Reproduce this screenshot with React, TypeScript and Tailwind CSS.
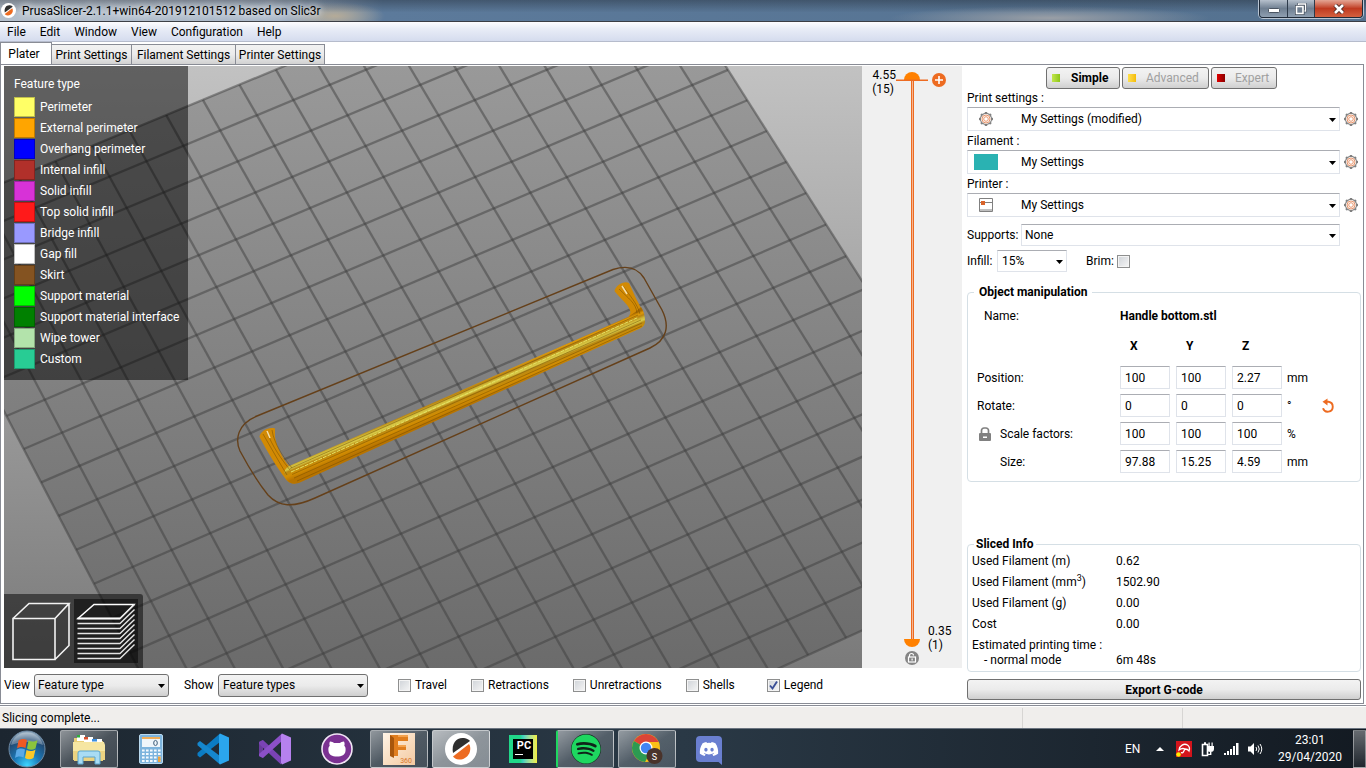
import React from "react";
import { FaDiscord, FaSpotify } from "react-icons/fa";

type Pt = [number, number];

/* ---------- print bed projection ---------- */
const TL: Pt = [-94, 223.3];
const TR: Pt = [633.5, -79];
const BR: Pt = [1034.3, 552.4];
const BL: Pt = [260.7, 903.5];

function makeProjector(p0: Pt, p1: Pt, p2: Pt, p3: Pt) {
  const sx = p0[0] - p1[0] + p2[0] - p3[0];
  const sy = p0[1] - p1[1] + p2[1] - p3[1];
  const dx1 = p1[0] - p2[0];
  const dx2 = p3[0] - p2[0];
  const dy1 = p1[1] - p2[1];
  const dy2 = p3[1] - p2[1];
  const det = dx1 * dy2 - dx2 * dy1;
  const g = (sx * dy2 - dx2 * sy) / det;
  const h = (dx1 * sy - sx * dy1) / det;
  return (u: number, v: number): Pt => {
    const w = 1 + g * u + h * v;
    return [
      ((p1[0] - p0[0] + g * p1[0]) * u + (p3[0] - p0[0] + h * p3[0]) * v + p0[0]) / w,
      ((p1[1] - p0[1] + g * p1[1]) * u + (p3[1] - p0[1] + h * p3[1]) * v + p0[1]) / w,
    ];
  };
}

const project = makeProjector(TL, TR, BR, BL);
const steps = Array.from({ length: 21 }, (_, i) => i / 20);

function Scene() {
  return (
    <svg className="block h-full w-full" viewBox="4 66 858 602" preserveAspectRatio="xMidYMid slice" aria-hidden="true">
      <defs>
        <linearGradient id="sky" gradientUnits="userSpaceOnUse" x1="0" y1="66" x2="0" y2="668">
          <stop offset="0" stopColor="#c2c2c2" />
          <stop offset="1" stopColor="#7a7a7a" />
        </linearGradient>
        <linearGradient id="bed" gradientUnits="userSpaceOnUse" x1="0" y1="66" x2="0" y2="668">
          <stop offset="0" stopColor="#999999" />
          <stop offset="1" stopColor="#6b6b6b" />
        </linearGradient>
        <linearGradient id="bar" gradientUnits="userSpaceOnUse" x1="457" y1="388" x2="465" y2="407">
          <stop offset="0" stopColor="#a86a00" />
          <stop offset="0.12" stopColor="#e09a08" />
          <stop offset="0.24" stopColor="#b98412" />
          <stop offset="0.36" stopColor="#cfb838" />
          <stop offset="0.46" stopColor="#d8ca48" />
          <stop offset="0.56" stopColor="#b98a14" />
          <stop offset="0.76" stopColor="#d28d02" />
          <stop offset="1" stopColor="#b87400" />
        </linearGradient>
      </defs>
      <rect x="4" y="66" width="858" height="602" fill="url(#sky)" />
      <polygon points={[TL, TR, BR, BL].map((p) => p.join(",")).join(" ")} fill="url(#bed)" />
      <g stroke="#3c3c3c" strokeOpacity="0.48" strokeWidth="2.3">
        {steps.map((t) => {
          const a = project(t, 0);
          const b = project(t, 1);
          const c = project(0, t);
          const d = project(1, t);
          return (
            <React.Fragment key={t}>
              <line x1={a[0]} y1={a[1]} x2={b[0]} y2={b[1]} />
              <line x1={c[0]} y1={c[1]} x2={d[0]} y2={d[1]} />
            </React.Fragment>
          );
        })}
      </g>
      <path
        d="M257 416 L613 269.500 C627 265 637 267 644 278 L662 310 C670 326 667 340 650 348 L315 498 C293 508 279 507 268 495 C260 485 248 466 240 451 C235 440 237 424 257 416 Z"
        fill="none"
        stroke="#65401a"
        strokeWidth="1.400"
      />
      {/* feet */}
      <path d="M614.500 291 C616 285 624 280.500 629 283 L634 294 C637 302 642 307 644 316 L638 326 L629 316 C635 309 621 300 614.500 291 Z" fill="#d28a04" />
      <path d="M259.500 437 C260 431 269 426.500 275 428.500 L275 437 C277 448 283 459 289 466 L300 482 C293 485 288 483 285 478 C276 466 268 453 259.500 437 Z" fill="#d28a04" />
      {/* bar */}
      <path d="M288 466.500 L628 317 C634 313 638 310 641 307 C644 311 645 317 645 321 C645 325 643 327 640 328.500 L301 482 C295 485 289 484 286 479 C283 474 284 470 288 466.500 Z" fill="url(#bar)" />
      <g stroke="#6f4a00" strokeWidth="0.800" strokeOpacity="0.6" fill="none">
        <path d="M290 468.500 L638 315" />
        <path d="M292 474.500 L641 320" />
        <path d="M294 478 L642 323" />
        <path d="M297 481 L642 326" />
        <path d="M263 434 C270 446 279 462 287 475" />
        <path d="M267 432 C272 446 282 460 290 470" />
        <path d="M272 430 C274 444 284 458 292 468" />
        <path d="M619 289 C628 298 636 303 637 313" />
        <path d="M623 286 C630 296 637 303 640 314" />
      </g>
      <path d="M291 472 L638 317.500" stroke="#e6e464" strokeWidth="1" strokeDasharray="4 1" fill="none" />
      <path d="M267 431 L270 438 M622 286 L627 294" stroke="#f6dfa8" strokeWidth="1.500" fill="none" />
    </svg>
  );
}

/* ---------- small drawings ---------- */
function Caret({ className = "" }: { className?: string }) {
  return (
    <svg className={`pointer-events-none absolute ${className}`} width="7" height="4" viewBox="0 0 7 4" aria-hidden="true">
      <path d="M0 0h7L3.500 4z" fill="#000" />
    </svg>
  );
}

function Gear() {
  const teeth = Array.from({ length: 8 }, (_, i) => i * 45);
  return (
    <svg width="14" height="14" viewBox="0 0 14 14" aria-hidden="true">
      <circle cx="7" cy="7" r="5.600" fill="none" stroke="#808080" strokeWidth="1.100" />
      {teeth.map((a) => (
        <rect key={a} x="5.800" y="0" width="2.400" height="1.700" fill="#808080" transform={`rotate(${a} 7 7)`} />
      ))}
      <circle cx="7" cy="7" r="4" fill="none" stroke="#e58a5c" strokeWidth="0.900" />
      <circle cx="7" cy="7" r="2.300" fill="none" stroke="#e58a5c" strokeWidth="0.900" />
    </svg>
  );
}

function PrusaLogo({ size }: { size: number }) {
  return (
    <svg width={size} height={size} viewBox="0 0 32 32" aria-hidden="true">
      <circle cx="16" cy="16" r="16" fill="#fff" />
      <path d="M8 20 C6 10 12 4 19 5 C22 5.500 24 6.500 25 8 Z" fill="#2f2f2f" />
      <path d="M24 11 C28 18 22 27 14 26.500 C11 26.300 9 25 8 23.500 Z" fill="#ed6b21" />
    </svg>
  );
}

/* ---------- reusable controls ---------- */
const fieldBorder = "border border-[#dfe3ea] border-t-[#abadb3] bg-white";
const buttonFace = "rounded-[3px] border border-[#707070] bg-linear-to-b from-[#f3f3f3] from-0% via-[#ebebeb] via-50% to-[#cfcfcf]";

function Preset({ id, label, value, icon }: { id: string; label: string; value: string; icon: React.ReactNode }) {
  return (
    <div>
      <label htmlFor={id} className="block h-[19px] leading-[21px]">
        {label}
      </label>
      <div className="flex items-center gap-1">
        <div className="relative flex-1">
          <select id={id} className={`block h-6 w-full appearance-none pl-[53px] outline-none ${fieldBorder}`}>
            <option>{value}</option>
          </select>
          <span className="pointer-events-none absolute top-0 left-[7px] flex h-6 w-6 items-center justify-center">{icon}</span>
          <Caret className="top-[11px] right-1" />
        </div>
        <button type="button" aria-label={`Edit ${label}`} className="w-[17px]">
          <Gear />
        </button>
      </div>
    </div>
  );
}

function Check({ label, checked = false }: { label: string; checked?: boolean }) {
  return (
    <label className="flex items-center gap-1">
      <span className="relative flex h-[13px] w-[13px]">
        <input
          type="checkbox"
          defaultChecked={checked}
          className="peer h-[13px] w-[13px] appearance-none border border-[#8e8f8f] bg-linear-to-br from-[#cfd3d8] to-[#f6f6f6] shadow-[inset_0_0_0_1px_#f4f4f4]"
        />
        <svg className="pointer-events-none absolute top-0 left-0 hidden peer-checked:block" width="13" height="13" viewBox="0 0 13 13" aria-hidden="true">
          <path d="M3 6.500L5.500 9.500L10 2.500" fill="none" stroke="#3a4f96" strokeWidth="1.900" />
        </svg>
      </span>
      {label}
    </label>
  );
}

/* ---------- data ---------- */
const legend: [string, string][] = [
  ["Perimeter", "bg-[#ffff66]"],
  ["External perimeter", "bg-[#ffa500]"],
  ["Overhang perimeter", "bg-[#0000ff]"],
  ["Internal infill", "bg-[#b1302a]"],
  ["Solid infill", "bg-[#d732d7]"],
  ["Top solid infill", "bg-[#ff1a1a]"],
  ["Bridge infill", "bg-[#9999ff]"],
  ["Gap fill", "bg-[#ffffff]"],
  ["Skirt", "bg-[#845321]"],
  ["Support material", "bg-[#00ff00]"],
  ["Support material interface", "bg-[#008000]"],
  ["Wipe tower", "bg-[#b3e3ab]"],
  ["Custom", "bg-[#28cc94]"],
];

const axes = ["X", "Y", "Z"];
const manipulation: { label: string; values: string[]; unit: string; lock?: boolean; indent?: boolean; reset?: boolean }[] = [
  { label: "Position:", values: ["100", "100", "2.27"], unit: "mm" },
  { label: "Rotate:", values: ["0", "0", "0"], unit: "°", reset: true },
  { label: "Scale factors:", values: ["100", "100", "100"], unit: "%", lock: true, indent: true },
  { label: "Size:", values: ["97.88", "15.25", "4.59"], unit: "mm", indent: true },
];

/* ---------- window parts ---------- */
function TitleBar() {
  return (
    <header className="flex h-[22px] shrink-0 items-center justify-between border-b border-[#3a3d44] bg-[linear-gradient(to_bottom,rgba(20,24,30,0.35),rgba(20,24,30,0)_60%),radial-gradient(ellipse_160px_12px_at_1050px_18px,#9a9fa6,transparent),radial-gradient(ellipse_50px_14px_at_335px_16px,#b5ab98,transparent),linear-gradient(to_right,#b4bfcc_0%,#a9b7c8_20%,#5c7a9b_28%,#54718f_100%)] pl-px">
      <div className="flex min-w-0 items-center gap-[6px]">
        <PrusaLogo size={15} />
        <h1 className="whitespace-nowrap [text-shadow:0_0_6px_#ffffff,0_0_10px_#ffffff]">PrusaSlicer-2.1.1+win64-201912101512 based on Slic3r</h1>
      </div>
      <div className="mr-[3px] flex h-[18px] self-start overflow-hidden rounded-b-[4px] border border-t-0 border-[#1f2a38] shadow-[0_0_0_1px_#b8c4d2]">
        <button type="button" aria-label="Minimize" className="flex w-7 items-center justify-center border-r border-[#2d3a4a] bg-linear-to-b from-[#b6c0cc] via-[#6f7f91] to-[#8f9fb1]">
          <svg width="12" height="18" viewBox="0 0 12 18" aria-hidden="true">
            <rect x="0.500" y="8.500" width="11" height="4" rx="1" fill="#fff" stroke="#4b5563" />
          </svg>
        </button>
        <button type="button" aria-label="Restore" className="flex w-[27px] items-center justify-center border-r border-[#2d3a4a] bg-linear-to-b from-[#b6c0cc] via-[#6f7f91] to-[#8f9fb1]">
          <svg width="12" height="12" viewBox="0 0 12 12" aria-hidden="true">
            <path d="M3.500 3V1h7v7h-2" fill="none" stroke="#3f4a58" strokeWidth="2.600" />
            <path d="M3.500 3V1h7v7h-2" fill="none" stroke="#fff" strokeWidth="1.400" />
            <rect x="1.500" y="3.500" width="6.500" height="7" fill="none" stroke="#3f4a58" strokeWidth="3" />
            <rect x="1.500" y="3.500" width="6.500" height="7" fill="#6f7f91" stroke="#fff" strokeWidth="1.600" />
          </svg>
        </button>
        <button type="button" aria-label="Close" className="flex w-[47px] items-center justify-center bg-linear-to-b from-[#e3a594] from-0% via-[#bf3a20] via-50% to-[#d3603f]">
          <svg width="12" height="10" viewBox="0 0 12 10" aria-hidden="true">
            <path d="M2 1L10 9M10 1L2 9" stroke="#4b2a26" strokeWidth="4.400" />
            <path d="M2 1L10 9M10 1L2 9" stroke="#fff" strokeWidth="2.600" />
          </svg>
        </button>
      </div>
    </header>
  );
}

function MenuBar() {
  return (
    <nav className="flex h-5 shrink-0 items-center gap-[14px] border-b border-[#b6bccc] bg-linear-to-b from-[#fdfdff] from-0% via-[#e9edf7] via-35% to-[#d5dcee] pl-[7px]">
      {["File", "Edit", "Window", "View", "Configuration", "Help"].map((m) => (
        <button key={m} type="button">
          {m}
        </button>
      ))}
    </nav>
  );
}

function Tabs() {
  return (
    <div role="tablist" className="flex h-[22px] shrink-0 items-end">
      <button type="button" role="tab" aria-selected="true" className="-mb-px h-[23px] w-[52px] border border-b-0 border-[#898c95] bg-white pr-1 text-center leading-[20px]">
        Plater
      </button>
      {[
        ["Print Settings", "w-20"],
        ["Filament Settings", "w-[104px]"],
        ["Printer Settings", "w-[89px]"],
      ].map(([name, width]) => (
        <button
          key={name}
          type="button"
          role="tab"
          aria-selected="false"
          className={`h-5 border border-b-0 border-l-0 border-[#898c95] bg-linear-to-b from-[#f2f2f2] via-[#ebebeb] to-[#d2d2d2] text-center leading-[20px] whitespace-nowrap ${width}`}
        >
          {name}
        </button>
      ))}
    </div>
  );
}

function Legend() {
  return (
    <div className="absolute top-0 left-0 h-[314px] w-[184px] bg-black/50 pt-[9px] pl-[10px] text-white">
      <p className="h-[21px] leading-[18px]">Feature type</p>
      <ul>
        {legend.map(([name, color]) => (
          <li key={name} className="flex h-[21px] items-center gap-[5px] whitespace-nowrap">
            <span className={`h-5 w-[21px] border border-black/25 ${color}`} />
            {name}
          </li>
        ))}
      </ul>
    </div>
  );
}

function ViewButtons() {
  const layers = Array.from({ length: 9 }, (_, i) => i * 5);
  return (
    <div className="absolute bottom-0 left-0 flex h-[74px] w-[139px] items-center gap-[2px] rounded-tr-[3px] bg-black/50 pl-1">
      <button type="button" aria-label="3D editor view" className="h-16 w-16">
        <svg width="64" height="64" viewBox="0 0 64 64" fill="none" stroke="#f2f2f2" strokeWidth="1.600" aria-hidden="true">
          <path d="M5 19.500H47V60.500H5zM5 19.500L21 4.500H61L47 19.500M61 4.500V46.500L47 60.500" />
        </svg>
      </button>
      <button type="button" aria-label="Preview" className="h-16 w-16 bg-black/50">
        <svg width="64" height="64" viewBox="0 0 64 64" fill="none" aria-hidden="true">
          <path d="M4 19.500L20 5.500H60L46 19.500z" stroke="#fff" strokeWidth="1.500" />
          {layers.map((d) => (
            <path key={d} d={`M3.500 ${19.5 + d}H46L60.500 ${5.500 + d}`} stroke="#e4e4e4" strokeWidth="1.400" />
          ))}
          <path d="M3.500 19.500H46" stroke="#fff" strokeWidth="1.500" />
        </svg>
      </button>
    </div>
  );
}

function LayerSlider() {
  return (
    <aside className="relative grid w-[100px] shrink-0 grid-cols-[34px_32px_34px] bg-[#f0f0f0] leading-[14px]">
      <div className="pt-[2px] text-right">
        <p>4.55</p>
        <p className="pr-[2px]">(15)</p>
      </div>
      <div className="flex flex-col items-center pt-[5px] pb-[3px]">
        <svg width="32" height="10" viewBox="0 0 32 10" aria-hidden="true">
          <path d="M8 9a8 8 0 0 1 16 0z" fill="#ff8000" />
          <rect x="0" y="8.500" width="32" height="1.500" fill="#ed6b21" />
        </svg>
        <div className="w-[3px] flex-1 border-x border-[#ed6b21] bg-[#f7b48f]" />
        <svg width="16" height="8" viewBox="0 0 16 8" aria-hidden="true">
          <path d="M0 0a8 8 0 0 0 16 0z" fill="#ff8000" />
        </svg>
        <button type="button" aria-label="Unlock range" className="mt-1">
          <svg className="block" width="14" height="14" viewBox="0 0 14 14" aria-hidden="true">
            <circle cx="7" cy="7" r="7" fill="#858585" />
            <rect x="3.500" y="6" width="7" height="5" fill="none" stroke="#fff" strokeWidth="1.200" />
            <path d="M4.500 6V4.500a2 2 0 0 1 4 0" fill="none" stroke="#fff" strokeWidth="1.200" />
            <rect x="6.500" y="7.500" width="1.200" height="2" fill="#fff" />
          </svg>
        </button>
      </div>
      <div className="flex flex-col justify-between pt-[7px] pb-[16px]">
        <button type="button" aria-label="Add color change" className="self-start pl-1">
          <svg className="block" width="14" height="14" viewBox="0 0 14 14" aria-hidden="true">
            <circle cx="7" cy="7" r="7" fill="#ed6b21" />
            <path d="M7 3v8M3 7h8" stroke="#fff" strokeWidth="1.600" />
          </svg>
        </button>
        <div>
          <p>0.35</p>
          <p>(1)</p>
        </div>
      </div>
      <input type="range" aria-label="Visible layers" min={1} max={15} defaultValue={15} className="absolute top-6 bottom-10 left-[42px] w-4 opacity-0 [direction:rtl] [writing-mode:vertical-lr]" />
    </aside>
  );
}

function ViewControls() {
  return (
    <div className="flex h-[35px] shrink-0 items-center pb-px">
      <label htmlFor="view" className="w-[30px]">
        View
      </label>
      <div className="relative">
        <select id="view" className={`block h-[23px] w-[135px] appearance-none pl-[3px] ${buttonFace}`}>
          <option>Feature type</option>
        </select>
        <Caret className="top-[10px] right-1" />
      </div>
      <label htmlFor="show" className="w-[49px] pl-[15px]">
        Show
      </label>
      <div className="relative">
        <select id="show" className={`block h-[23px] w-[150px] appearance-none pl-1 ${buttonFace}`}>
          <option>Feature types</option>
        </select>
        <Caret className="top-[10px] right-1" />
      </div>
      <div className="ml-[30px] flex items-center gap-8">
        <div className="flex items-center gap-6">
          <Check label="Travel" />
          <Check label="Retractions" />
          <Check label="Unretractions" />
          <Check label="Shells" />
        </div>
        <Check label="Legend" checked />
      </div>
    </div>
  );
}

function SettingsPanel() {
  return (
    <section className="flex w-[401px] shrink-0 flex-col pt-[2px] pr-[2px] pb-[3px] pl-[5px]">
      <div className="flex h-[21px] gap-[2px] pl-[79px]">
        <button type="button" className={`flex h-[22px] w-[74px] items-center gap-[11px] pl-[5px] font-bold ${buttonFace}`}>
          <span className="h-2 w-2 bg-linear-to-r from-[#c3e64a] to-[#8cc614]" />
          Simple
        </button>
        <button type="button" className={`flex h-[22px] w-[87px] items-center gap-[10px] pl-[5px] text-[#a0a0a0] ${buttonFace}`}>
          <span className="h-2 w-2 bg-linear-to-r from-[#ffe04a] to-[#f4bc00]" />
          Advanced
        </button>
        <button type="button" className={`flex h-[22px] w-[66px] items-center gap-[10px] pl-[5px] text-[#a0a0a0] ${buttonFace}`}>
          <span className="h-2 w-2 bg-linear-to-r from-[#e00000] to-[#8c0000]" />
          Expert
        </button>
      </div>
      <Preset id="print" label="Print settings :" value="My Settings (modified)" icon={<Gear />} />
      <Preset id="filament" label="Filament :" value="My Settings" icon={<span className="h-4 w-6 bg-[#2ab2b2]" />} />
      <Preset
        id="printer"
        label="Printer :"
        value="My Settings"
        icon={
          <svg width="14" height="14" viewBox="0 0 14 14" aria-hidden="true">
            <path d="M0.500 0.500h13v13h-13zM0.500 4.500h13M0.500 12h13" fill="none" stroke="#808080" />
            <rect x="2" y="3" width="4" height="4" fill="#d9632a" />
          </svg>
        }
      />
      <div className="mt-[7px] flex items-center pr-[21px]">
        <label htmlFor="supports" className="w-[54px] whitespace-nowrap">
          Supports:
        </label>
        <div className="relative flex-1">
          <select id="supports" className={`block h-[22px] w-full appearance-none pl-[3px] ${fieldBorder}`}>
            <option>None</option>
          </select>
          <Caret className="top-[10px] right-1" />
        </div>
      </div>
      <div className="mt-1 flex items-center">
        <label htmlFor="infill" className="w-[30px]">
          Infill:
        </label>
        <div className="relative">
          <select id="infill" className={`block h-[22px] w-[70px] appearance-none pl-1 ${fieldBorder}`}>
            <option>15%</option>
          </select>
          <Caret className="top-[10px] right-1" />
        </div>
        <label htmlFor="brim" className="ml-[19px] w-[31px]">
          Brim:
        </label>
        <input
          id="brim"
          type="checkbox"
          className="h-[13px] w-[13px] appearance-none border border-[#8e8f8f] bg-linear-to-br from-[#cfd3d8] to-[#f6f6f6] shadow-[inset_0_0_0_1px_#f4f4f4]"
        />
      </div>

      <fieldset className="mt-[11px] rounded-[4px] border border-[#d5dfe5] pb-2 leading-[18px]">
        <legend className="ml-[6px] px-[5px] font-bold">Object manipulation</legend>
        <div className="grid grid-cols-[152px_1fr] pt-[6px]">
          <span className="pl-4">Name:</span>
          <strong>Handle bottom.stl</strong>
        </div>
        <div className="grid grid-cols-[152px_50px_50px_50px] gap-x-[6px] pt-3 font-bold">
          <span className="-mr-[6px]" />
          {axes.map((a) => (
            <span key={a} className="pl-1">
              {a}
            </span>
          ))}
        </div>
        <div className="flex flex-col gap-[5px] pt-[11px]">
          {manipulation.map((row) => (
            <div key={row.label} className="flex h-[23px] items-center gap-[6px]">
              <span className="-mr-[6px] flex w-[152px] items-center pl-[9px]">
                {row.indent && (
                  <span className="flex w-[23px] pl-px">
                    {row.lock && (
                      <svg width="14" height="14" viewBox="0 0 14 14" aria-hidden="true">
                        <rect x="1" y="6" width="12" height="8" rx="1" fill="#808080" />
                        <path d="M3.500 6.500V3.500a2.500 2.500 0 0 1 2.500-2.500h2a2.500 2.500 0 0 1 2.500 2.500V6.500" fill="none" stroke="#808080" strokeWidth="1.700" />
                        <rect x="5" y="9.500" width="4" height="1.500" fill="#fff" />
                      </svg>
                    )}
                  </span>
                )}
                {row.label}
              </span>
              {row.values.map((v, i) => (
                <input key={axes[i]} aria-label={`${row.label} ${axes[i]}`} defaultValue={v} className={`h-[23px] w-[50px] pl-1 outline-none ${fieldBorder}`} />
              ))}
              <span className="-ml-px w-7">{row.unit}</span>
              {row.reset && (
                <button type="button" aria-label="Reset rotation">
                  <svg className="block" width="14" height="16" viewBox="0 0 14 16" aria-hidden="true">
                    <path d="M4 3.800H7.500a5 5 0 1 1-5.500 6.500" fill="none" stroke="#ed6b21" strokeWidth="1.900" />
                    <path d="M6.500 0.500V7.500L1.500 3.800z" fill="#ed6b21" />
                  </svg>
                </button>
              )}
            </div>
          ))}
        </div>
      </fieldset>

      <fieldset className="mt-auto h-[137px] rounded-[4px] border border-[#d5dfe5] pl-1 leading-[18px]">
        <legend className="ml-[2px] px-[2px] font-bold">Sliced Info</legend>
        <table className="-mt-[3px] w-full text-left">
          <tbody>
            {[
              [<>Used Filament (m)</>, "0.62"],
              [
                <>
                  Used Filament (mm<sup className="text-[9px]">3</sup>)
                </>,
                "1502.90",
              ],
              [<>Used Filament (g)</>, "0.00"],
              [<>Cost</>, "0.00"],
            ].map(([k, v], i) => (
              <tr key={i} className="h-[21px]">
                <th scope="row" className="w-36 font-normal">
                  {k}
                </th>
                <td>{v}</td>
              </tr>
            ))}
            <tr className="align-bottom leading-[15px]">
              <th scope="row" className="pt-1 font-normal">
                Estimated printing time :
                <br />
                <span className="pl-3">- normal mode</span>
              </th>
              <td>6m 48s</td>
            </tr>
          </tbody>
        </table>
      </fieldset>
      <button type="button" className={`mt-[7px] h-[21px] shrink-0 font-bold ${buttonFace}`}>
        Export G-code
      </button>
    </section>
  );
}

/* ---------- taskbar ---------- */
function TaskItem({ label, open, className = "", children }: { label: string; open?: boolean; className?: string; children: React.ReactNode }) {
  return (
    <button
      type="button"
      aria-label={label}
      className={`flex h-[38px] w-[58px] items-center justify-center ${
        open ? "rounded-[2px] border border-white/50 bg-linear-to-br from-white/50 via-white/20 to-white/15" : ""
      } ${className}`}
    >
      {children}
    </button>
  );
}

function Taskbar() {
  return (
    <footer className="flex h-10 shrink-0 items-center border-t border-[#6b7480] bg-linear-to-r from-[#1c2630] from-0% via-[#2a3946] via-50% to-[#131a22] text-white">
      <button type="button" aria-label="Start" className="flex w-[54px] justify-center">
        <svg width="38" height="38" viewBox="0 0 38 38" aria-hidden="true">
          <defs>
            <radialGradient id="orb" cx="0.5" cy="0.95" r="0.9">
              <stop offset="0" stopColor="#3fd6ff" />
              <stop offset="0.4" stopColor="#1b79b8" />
              <stop offset="0.8" stopColor="#224a72" />
              <stop offset="1" stopColor="#8fa8bd" />
            </radialGradient>
          </defs>
          <circle cx="19" cy="19" r="18" fill="url(#orb)" stroke="#6f8ba5" />
          <path d="M3 15a16.500 16.500 0 0 1 32 0c-9-4-22-4-32 0z" fill="#fff" opacity="0.3" />
          <path d="M10.500 10.500c3-2 6-2 8.500-.5L17.500 18c-3-1.500-6-1.500-8.500.5z" fill="#ee5a24" />
          <path d="M20.500 10.500c3 1.500 6 1.500 9-.5l-2 8.500c-3 1.800-6 1.500-8.500 0z" fill="#8cc43c" />
          <path d="M8.500 20c3-2 6-1.800 8.500-.5L15.500 27.500c-3-1.500-6-1.300-8.500.5z" fill="#5aa9e6" />
          <path d="M18.500 20c3 1.500 6 1.500 9-.5L25.500 28c-3 1.800-6 1.500-8.500 0z" fill="#fbc828" />
        </svg>
      </button>
      <div className="flex gap-1 pl-[6px]">
        <TaskItem label="Explorer" open>
          <svg width="34" height="32" viewBox="0 0 34 32" aria-hidden="true">
            <path d="M2 5h12l1 3h16v20H2z" fill="#e9cf78" />
            <path d="M5 2h8v6H5z" fill="#fff" />
            <rect x="5" y="2" width="3" height="2.500" fill="#2fae3b" />
            <path d="M12 4h9v5h-9z" fill="#fff" />
            <rect x="12" y="4" width="4" height="2.500" fill="#d8502e" />
            <path d="M20 6h10v5H20z" fill="#fff" />
            <rect x="20" y="6" width="5" height="2.500" fill="#3c8fe0" />
            <path d="M1 9h31l1 3v15H1z" fill="#f6e6a2" />
            <path d="M1 18h32v9H1z" fill="#ecd381" />
            <path d="M6 31V20q0-2 2-2h18q2 0 2 2v11h-5v-7H11v7z" fill="#a9dcf4" stroke="#5ba6cf" />
          </svg>
        </TaskItem>
        <TaskItem label="Calculator">
          <svg width="24" height="30" viewBox="0 0 24 30" aria-hidden="true">
            <rect x="0.500" y="0.500" width="23" height="29" rx="1.500" fill="#7db4dd" stroke="#b9d9ef" />
            <rect x="3" y="3" width="18" height="2" fill="#efae5a" />
            <rect x="3" y="5" width="18" height="8" fill="#eef5fa" />
            <ellipse cx="16.500" cy="9" rx="1.800" ry="2.600" fill="none" stroke="#41607c" />
            {[15.5, 19, 22.500, 26].map((y) =>
              [3, 7, 11, 15, 19].map((x) => <rect key={`${x}-${y}`} x={x} y={y} width="2.600" height="2" fill="#f4f9fd" />),
            )}
            <rect x="19" y="22.500" width="2.600" height="5.500" fill="#f0a33c" />
          </svg>
        </TaskItem>
        <TaskItem label="Visual Studio Code">
          <svg width="32" height="32" viewBox="0 0 32 32" aria-hidden="true">
            <path d="M23 0.500V9L3 24.500 0.500 22.500V20z" fill="#0b7cc4" />
            <path d="M23 31.500V23L3 8 0.500 10v2.200z" fill="#1587ce" />
            <path d="M23 0.500L32 4.500V27.500L23 31.500 22 30V2z" fill="#2ba6ee" />
          </svg>
        </TaskItem>
        <TaskItem label="Visual Studio">
          <svg width="32" height="32" viewBox="0 0 32 32" aria-hidden="true">
            <path d="M0 9L4 7 4 25 0 23z" fill="#6a3c9c" />
            <path d="M4 7L22 24V31.500L0 11V9z" fill="#7a43b4" />
            <path d="M4 25L23 8V0.500L0 21V23z" fill="#8b50c8" />
            <path d="M23 0.500L32 4.500V27.500L23 31.500 22 30V2z" fill="#b681ee" />
          </svg>
        </TaskItem>
        <TaskItem label="GitHub Desktop">
          <svg width="32" height="32" viewBox="0 0 32 32" aria-hidden="true">
            <circle cx="16" cy="16" r="15" fill="#7b3192" stroke="#f1e5f5" strokeWidth="1.600" />
            <path d="M9 8.500c2 0 3 .8 4.200 1.600h5.600C20 9.300 21 8.500 23 8.500c.8 1.600.7 3 .3 4.300C24.500 14 24.800 15.500 24.500 18c-.5 4-3.500 5.500-8.500 5.500S8 22 7.500 18c-.3-2.500 0-4 1.200-5.200C8.300 11.500 8.200 10 9 8.500z" fill="#fff" />
          </svg>
        </TaskItem>
        <TaskItem label="Fusion 360" open>
          <span className="relative flex h-8 w-8 items-start justify-center bg-linear-to-br from-[#fff4e6] to-[#f3c9a0]">
            <svg width="26" height="32" viewBox="0 0 26 32" aria-hidden="true">
              <path d="M4 2H22V8H12V12H20V17H12V23H4z" fill="#e07d1e" />
              <path d="M4 2L8 5V25L4 23z" fill="#a8560c" />
              <path d="M12 12H20V14H12zM12 2H22V4H12z" fill="#f4a24d" />
            </svg>
            <span className="absolute right-[3px] bottom-0 text-[7px] leading-[8px] text-[#d9772a]">360</span>
          </span>
        </TaskItem>
        <TaskItem label="PrusaSlicer" open className="bg-white/35">
          <PrusaLogo size={32} />
        </TaskItem>
        <TaskItem label="PyCharm">
          <span className="flex h-7 w-7 items-center justify-center bg-linear-to-r from-[#21d789] from-40% via-[#3fd0c0] to-[#f4ee3a]">
            <span className="flex h-5 w-5 flex-col bg-black pl-[2px] text-[11px] leading-[13px] font-bold">
              PC
              <span className="mt-[2px] h-px w-2 bg-white" />
            </span>
          </span>
        </TaskItem>
        <TaskItem label="Spotify" open className="border-l-2 border-l-[#1ed760]">
          <span className="rounded-full bg-[#10231a]">
            <FaSpotify size={30} color="#1ed760" />
          </span>
        </TaskItem>
        <TaskItem label="Chrome" open>
          <svg width="32" height="32" viewBox="0 0 32 32" aria-hidden="true">
            <circle cx="15" cy="15" r="14" fill="#fbc116" />
            <path d="M15 15L2.900 8A14 14 0 0 1 27.100 8L27.500 9H15z" fill="#db4437" />
            <path d="M15 15L2.900 8A14 14 0 0 0 14 29L20 18z" fill="#2d9a52" />
            <circle cx="15" cy="15" r="6.500" fill="#fff" />
            <circle cx="15" cy="15" r="5.200" fill="#4285f4" />
            <circle cx="23.500" cy="23" r="8" fill="#4a332b" />
            <text x="23.500" y="26.500" fontSize="9" fill="#fff" textAnchor="middle" fontFamily="Roboto, sans-serif">
              S
            </text>
          </svg>
        </TaskItem>
        <TaskItem label="Discord">
          <span className="relative flex h-[26px] w-[26px] items-center justify-center rounded-[4px] bg-[#6a7fd0]">
            <FaDiscord size={20} color="#fff" />
            <svg className="absolute right-0 -bottom-[3px]" width="7" height="6" viewBox="0 0 7 6" aria-hidden="true">
              <path d="M0 0H7V6z" fill="#6a7fd0" />
            </svg>
          </span>
        </TaskItem>
      </div>
      <div className="ml-auto flex items-center">
        <span className="w-[31px]">EN</span>
        <button type="button" aria-label="Show hidden icons" className="w-5">
          <svg width="8" height="4" viewBox="0 0 8 4" aria-hidden="true">
            <path d="M0 4L4 0L8 4z" fill="#fff" />
          </svg>
        </button>
        <div className="flex items-center gap-[9px]">
          <svg width="16" height="16" viewBox="0 0 16 16" aria-hidden="true">
            <rect width="16" height="16" fill="#d4141c" />
            <path d="M3 9C3.500 4.500 8 2 11.500 4C13.500 5.500 14 7.500 13 10C12 8.500 10.500 8 9 8C7 7 5 7.500 3 9zM9 8L7 11.500Q5.500 12.500 5.500 11" fill="none" stroke="#fff" strokeWidth="1.300" />
            <circle cx="2.500" cy="13.500" r="2.300" fill="#ffee00" />
          </svg>
          <svg width="14" height="16" viewBox="0 0 14 16" aria-hidden="true">
            <path d="M1.500 3.500h5v11h-5zM3 2h2" fill="none" stroke="#fff" strokeWidth="1.600" />
            <path d="M6 5h7v3q0 3-3.500 3T6 8zM7.500 1.500h1.200V5H7.500zM10.500 1.500h1.200V5h-1.200zM9 11h1.400v3H7v-1.300h2z" fill="#fff" />
          </svg>
          <svg width="15" height="14" viewBox="0 0 15 14" aria-hidden="true">
            <path d="M0 11h2v2H0zM3 9h2v4H3zM6 7h2v6H6zM9 4h2v9H9zM12 1h2.500v12H12z" fill="#fff" />
          </svg>
          <svg width="15" height="14" viewBox="0 0 15 14" aria-hidden="true">
            <path d="M0 4.500h2.500L6 1v12L2.500 9.500H0z" fill="#fff" />
            <path d="M8 5q1.500 2 0 4M10 3.500q2.500 3.500 0 7M12 2q3.500 5 0 10" fill="none" stroke="#fff" />
          </svg>
        </div>
        <time className="w-[90px] pl-[4px] text-center leading-[17px]">
          23:01
          <br />
          29/04/2020
        </time>
        <button type="button" aria-label="Show desktop" className="h-[38px] w-[13px] border border-white/40 bg-linear-to-b from-white/35 to-white/5" />
      </div>
    </footer>
  );
}

export default function App() {
  return (
    <div className="flex h-screen min-h-[700px] flex-col overflow-hidden bg-white font-['Roboto','Open_Sans',sans-serif] text-[12px] leading-[16px] text-black">
      <TitleBar />
      <MenuBar />
      <Tabs />
      <main className="mr-[2px] flex min-h-0 flex-1 border border-[#898c95] pl-[3px]">
        <div className="flex min-w-0 flex-1 flex-col pt-px">
          <div className="flex min-h-0 flex-1">
            <div className="relative min-w-0 flex-1 overflow-hidden">
              <Scene />
              <Legend />
              <ViewButtons />
            </div>
            <LayerSlider />
          </div>
          <ViewControls />
        </div>
        <SettingsPanel />
      </main>
      <div className="mt-px h-[2px] shrink-0 border-t border-[#898c95]" />
      <div role="status" className="flex h-[21px] shrink-0 items-center bg-[#f0eeec] pl-[2px]">
        <span className="flex-1">Slicing complete...</span>
        <span className="h-5 w-40 border-l border-[#d7d5d3]" />
        <span className="h-5 w-[184px] border-l border-[#d7d5d3]" />
      </div>
      <Taskbar />
    </div>
  );
}
